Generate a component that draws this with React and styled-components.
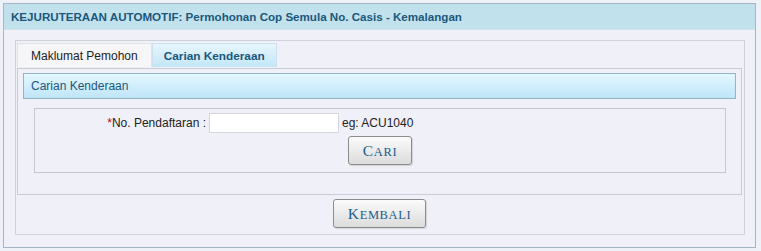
import React from 'react';
import styled, { createGlobalStyle } from 'styled-components';

const GlobalStyle = createGlobalStyle`
    body {
        margin: 0;
        background: #eef1f8;
        font-family: "Liberation Sans", Arial, sans-serif;
        font-size: 12px;
    }
`;

const Page = styled.div`
    width: 761px;
    height: 251px;
    padding: 3px 5px 4px 3px;
    box-sizing: border-box;
`;

const Panel = styled.div`
    border: 1px solid #a3b6c6;
    background: #f0f0f8;
    height: 245px;
    box-sizing: border-box;
    display: flex;
    flex-direction: column;
`;

const PanelTitle = styled.div`
    height: 25px;
    background: #c1e2ed;
    color: #1b577c;
    font-weight: bold;
    font-size: 11.6px;
    display: flex;
    align-items: center;
    padding-left: 7px;
    border-bottom: 1px solid #d8e4ec;
`;

const PanelBody = styled.div`
    padding: 10px 10px 11px 11px;
`;

const TabsBox = styled.div`
    border: 1px solid #cfd2da;
    padding: 2px 2px 0 1px;
    height: 195px;
    box-sizing: border-box;
`;

const TabList = styled.div`
    display: flex;
    height: 25px;
`;

const Tab = styled.div`
    height: 24px;
    display: flex;
    align-items: center;
    padding: 0 ${p => (p.$active ? '11px' : '13px')};
    font-size: ${p => (p.$active ? '11.8px' : '12px')};
    box-sizing: border-box;
    border: 1px solid ${p => (p.$active ? '#cde2ee' : '#e2e2e6')};
    border-bottom: none;
    color: ${p => (p.$active ? '#1b577c' : '#222')};
    font-weight: ${p => (p.$active ? 'bold' : 'normal')};
    background: ${p => (p.$active
        ? 'linear-gradient(#e6f6fd, #c3e6f6)'
        : '#f6f6f8')};
`;

const TabPanel = styled.div`
    border: 1px solid #c9ccd4;
    height: 127px;
    box-sizing: border-box;
    padding: 4px 5px 0 5px;
`;

const SectionTitle = styled.div`
    height: 26px;
    box-sizing: border-box;
    border: 1px solid #95b4ca;
    background: linear-gradient(#e3f7fe, #bfe5f8);
    color: #1b577c;
    font-size: 12px;
    display: flex;
    align-items: center;
    padding-left: 7px;
`;

const FormBox = styled.div`
    margin: 9px 10px 0 11px;
    border: 1px solid #c6c8d0;
    height: 65px;
    box-sizing: border-box;
    padding: 3px 0 0;
    display: flex;
    flex-direction: column;
    align-items: center;
`;

const FieldRow = styled.div`
    align-self: stretch;
    display: grid;
    grid-template-columns: 174px 133px auto;
    align-items: center;
    height: 21px;
`;

const Label = styled.label`
    text-align: right;
    color: #222;
    font-size: 12px;
    padding-right: 3px;
`;

const Required = styled.span`
    color: #d00000;
`;

const Input = styled.input`
    width: 130px;
    height: 20px;
    box-sizing: border-box;
    border: 1px solid #d4d6dc;
    background: #fff;
    font-size: 12px;
    padding: 0 3px;
`;

const Hint = styled.span`
    color: #222;
    font-size: 12px;
`;

const Button = styled.button`
    height: 29px;
    padding: 0 14px;
    margin-top: ${p => p.$top || 0}px;
    border: 1px solid #8c8c8c;
    border-radius: 3px;
    background: linear-gradient(#fbfbfb, #dcdcdc);
    color: #1d5d8b;
    font-family: "Liberation Serif", "Times New Roman", serif;
    font-size: 12.5px;
    letter-spacing: 0.6px;
    box-shadow: 1px 1px 1px rgba(0, 0, 0, 0.12);
`;

const Initial = styled.span`
    font-size: 15.5px;
`;

const Footer = styled.div`
    display: flex;
    justify-content: center;
    padding-top: 4px;
`;

const App = () => {
    return (
        <Page>
            <GlobalStyle />
            <Panel>
                <PanelTitle>KEJURUTERAAN AUTOMOTIF: Permohonan Cop Semula No. Casis - Kemalangan</PanelTitle>
                <PanelBody>
                    <TabsBox>
                        <TabList>
                            <Tab>Maklumat Pemohon</Tab>
                            <Tab $active>Carian Kenderaan</Tab>
                        </TabList>
                        <TabPanel>
                            <SectionTitle>Carian Kenderaan</SectionTitle>
                            <FormBox>
                                <FieldRow>
                                    <Label><Required>*</Required>No. Pendaftaran :</Label>
                                    <Input type="text" />
                                    <Hint>eg: ACU1040</Hint>
                                </FieldRow>
                                <Button $top={3}><Initial>C</Initial>ARI</Button>
                            </FormBox>
                        </TabPanel>
                        <Footer>
                            <Button><Initial>K</Initial>EMBALI</Button>
                        </Footer>
                    </TabsBox>
                </PanelBody>
            </Panel>
        </Page>
    );
};

export default App;
